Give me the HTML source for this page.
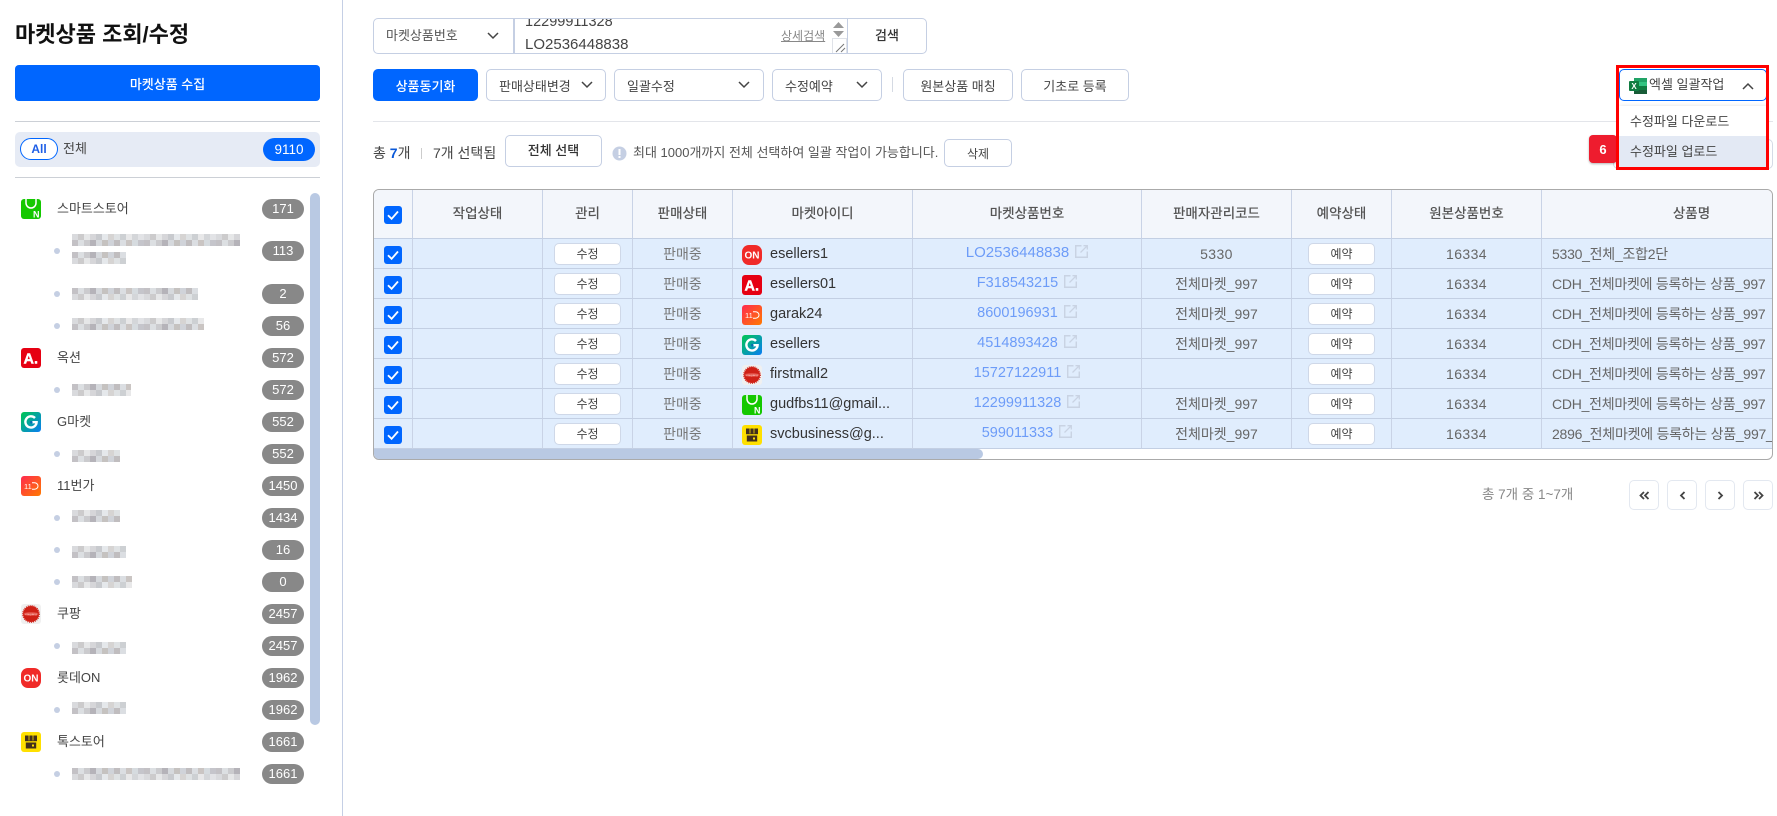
<!DOCTYPE html>
<html lang="ko"><head><meta charset="utf-8"><title>마켓상품 조회/수정</title>
<style>
*{box-sizing:border-box}
html,body{margin:0;padding:0;background:#fff}
body{width:1777px;height:816px;overflow:hidden;position:relative;font-family:"Liberation Sans","Noto Sans CJK KR",sans-serif;color:#333;font-size:13px}
.t{position:absolute;white-space:nowrap;line-height:20px}
.b{position:absolute;display:flex;align-items:center;justify-content:center;background:#fff;border:1px solid #c5cfe3;border-radius:5px;white-space:nowrap;color:#444}
.c{position:absolute;width:42px;height:20px;left:262px;border-radius:10px;background:#888;color:#fff;font-size:13px;line-height:20px;text-align:center}
.l{position:absolute;width:20px;height:20px;left:21px}
.d{position:absolute;width:6px;height:6px;left:54px;border-radius:50%;background:#c5cfe3}
.n{left:57px;font-size:13px;color:#444}
.ch{position:absolute;fill:none;stroke:#444;stroke-width:1.5}
.hr{position:absolute;height:1px;background:#e3e5ea}
#tb{position:absolute;left:373px;top:189px;width:1400px;height:271px;border:1px solid #aaa;border-radius:6px;overflow:hidden;background:#fff}
table{border-collapse:separate;border-spacing:0;table-layout:fixed;width:1468px;position:absolute;left:0;top:0}
th{height:49px;background:#f3f6fb;font-weight:500;font-size:13.5px;color:#555;border-right:1px solid #c9d3e6;border-bottom:1px solid #c3cfe3;padding:0 0 5px}
td{height:30px;background:#e0edfd;border-right:1px solid #c9d3e6;border-bottom:1px solid #c3cfe3;padding:0;text-align:center;font-size:14px;color:#666;white-space:nowrap;overflow:hidden}
td.y{color:#777}
td.m{text-align:left;padding-left:9px}
td.m div{display:flex;align-items:center;color:#333;height:29px;font-size:14.5px}
td.m svg{margin-right:8px;margin-top:2px;flex:none}
td.k{color:#6d9cf8;font-size:14.5px;padding-bottom:2px}
td.k svg{margin-left:6px;vertical-align:-1px}
td.p{text-align:left;padding-left:10px;letter-spacing:-.25px;color:#666}
.s{display:inline-block;width:67px;height:22px;line-height:20px;border:1px solid #cfd8e8;border-radius:5px;background:#fff;font-size:12px;color:#444;margin-top:1px}
.cb{display:block;margin:2px auto 0}
.num{letter-spacing:.4px}
.pg{top:480px;width:30px;height:30px;border-color:#e3e8f0}
</style></head><body>
<svg width="0" height="0" style="position:absolute">
<defs>
<symbol id="i-n" viewBox="0 0 20 20"><rect width="20" height="20" rx="3" fill="#14c800"/><path d="M5 0V4A5 5 0 0 0 15 4V0" fill="none" stroke="#fff" stroke-width="1.5"/><text x="12" y="18.5" font-family="Liberation Sans" font-weight="700" font-size="9" fill="#fff">N</text></symbol>
<symbol id="i-a" viewBox="0 0 20 20"><rect width="20" height="20" rx="3" fill="#e60012"/><text x="2.5" y="15.5" font-family="Liberation Sans" font-weight="700" font-size="14.5" fill="#fff" stroke="#fff" stroke-width=".4">A.</text></symbol>
<linearGradient id="gg" x1="0" y1="0" x2="1" y2="1"><stop offset="0" stop-color="#00c850"/><stop offset="1" stop-color="#0a7cf5"/></linearGradient>
<linearGradient id="g11" x1="0" y1="0" x2="1" y2="1"><stop offset="0" stop-color="#ff2a50"/><stop offset="1" stop-color="#ff7a00"/></linearGradient>
<symbol id="i-g" viewBox="0 0 20 20"><rect width="20" height="20" rx="3" fill="url(#gg)"/><path d="M14 6A5.6 5.6 0 1 0 15.6 10.2H10.500" fill="none" stroke="#fff" stroke-width="2.400"/><circle cx="10.300" cy="10.200" r="1.300" fill="#0a6fb0"/></symbol>
<symbol id="i-11" viewBox="0 0 20 20"><rect width="20" height="20" rx="3" fill="url(#g11)"/><text x="3" y="12.800" font-family="Liberation Sans" font-size="7.500" fill="#fff">11</text><path d="M11 6.800H13.500C15.500 6.800 17 8.200 17 10C17 11.800 15.500 13.200 13.500 13.200H11" fill="none" stroke="#fff" stroke-width="1"/></symbol>
<symbol id="i-c" viewBox="0 0 20 20"><rect width="20" height="20" rx="3" fill="#f0f0f0"/><circle cx="10" cy="10" r="8" fill="#cf2016"/><circle cx="10" cy="10" r="8.400" fill="none" stroke="#cf2016" stroke-width="1" stroke-dasharray="1 1"/><ellipse cx="10" cy="10" rx="7.500" ry="2" fill="#e04a40"/><text x="10" y="11" text-anchor="middle" font-family="Liberation Sans" font-size="3" fill="#ffd9d5">coupang</text></symbol>
<symbol id="i-o" viewBox="0 0 20 20"><rect width="20" height="20" rx="7" fill="#f02a28"/><text x="10" y="13.600" text-anchor="middle" font-family="Liberation Sans" font-weight="700" font-size="10" fill="#fff">ON</text></symbol>
<symbol id="i-t" viewBox="0 0 20 20"><rect width="20" height="20" rx="3" fill="#ffe000"/><path d="M4 3.500H16V9.200H4Z" fill="#43301c"/><path d="M7.600 3.500H8.400V8.500H7.600ZM11.600 3.500H12.400V8.500H11.600Z" fill="#ffe000"/><path d="M4.800 10.500H15.200V16.500H4.800Z" fill="#43301c"/><rect x="11" y="12.500" width="2" height="2" fill="#ffe000"/></symbol>
<symbol id="cbx" viewBox="0 0 18 18"><rect width="18" height="18" rx="3" fill="#0066ff"/><path d="M4 9.200L7.600 12.800L14 5.500" fill="none" stroke="#fff" stroke-width="1.800"/></symbol>
<symbol id="ext" viewBox="0 0 13 13"><path d="M6.500.7H.7V12.300H12.300V6.500" fill="none" stroke="#c9d3e3" stroke-width="1.500"/><path d="M5.500 7.500L12 1M8.500.7H12.300V4.500" fill="none" stroke="#c9d3e3" stroke-width="1.300"/></symbol>
<pattern id="px" patternUnits="userSpaceOnUse" width="72" height="12">
<rect width="72" height="12" fill="#dfe1e4"/>
<rect x="0" y="0" width="6" height="6" fill="#b9b7bc"/><rect x="6" y="0" width="6" height="6" fill="#d6dade"/><rect x="12" y="0" width="6" height="6" fill="#c3c3c6"/><rect x="18" y="0" width="6" height="6" fill="#a9a6ad"/><rect x="24" y="0" width="6" height="6" fill="#cfd3d8"/><rect x="30" y="0" width="6" height="6" fill="#bbb8b6"/><rect x="36" y="0" width="6" height="6" fill="#c8ccd3"/><rect x="42" y="0" width="6" height="6" fill="#b6b2b5"/><rect x="48" y="0" width="6" height="6" fill="#d5d9de"/><rect x="54" y="0" width="6" height="6" fill="#c1bcb9"/><rect x="60" y="0" width="6" height="6" fill="#d0d5da"/><rect x="66" y="0" width="6" height="6" fill="#bcbcc2"/>
<rect x="0" y="6" width="6" height="6" fill="#d3d4d8"/><rect x="6" y="6" width="6" height="6" fill="#c4c2c4"/><rect x="12" y="6" width="6" height="6" fill="#e2e3e5"/><rect x="18" y="6" width="6" height="6" fill="#cfd0d3"/><rect x="24" y="6" width="6" height="6" fill="#bfc1c6"/><rect x="30" y="6" width="6" height="6" fill="#e1e4e8"/><rect x="36" y="6" width="6" height="6" fill="#d0cdcc"/><rect x="42" y="6" width="6" height="6" fill="#dadde0"/><rect x="48" y="6" width="6" height="6" fill="#c5c8cc"/><rect x="54" y="6" width="6" height="6" fill="#e4e5e6"/><rect x="60" y="6" width="6" height="6" fill="#cdcfd3"/><rect x="66" y="6" width="6" height="6" fill="#dddfe2"/>
</pattern>
</defs></svg>

<!-- sidebar -->
<div style="position:absolute;left:342px;top:0;width:1px;height:816px;background:#c5cfe5"></div>
<div class="t" style="left:15px;top:20px;line-height:30px;font-size:22px;font-weight:700;color:#111">마켓상품 조회/수정</div>
<div class="b" style="left:15px;top:65px;width:305px;height:36px;background:#0066ff;border:0;color:#fff;font-weight:500;font-size:13px;border-radius:4px">마켓상품 수집</div>
<div class="hr" style="left:15px;top:121px;width:305px;background:#ccd0d6"></div>
<div style="position:absolute;left:15px;top:132px;width:305px;height:35px;background:#e6ebf5;border-radius:5px"></div>
<div class="b" style="left:20px;top:138px;width:38px;height:22px;border:1px solid #0066ff;border-radius:11px;background:#fff;color:#1e5ee6;font-weight:700;font-size:12px">All</div>
<div class="t" style="left:63px;top:139px;font-size:13px;color:#444">전체</div>
<div class="b" style="left:263px;top:138px;width:52px;height:23px;background:#0066ff;border:0;border-radius:12px;color:#fff;font-size:13.5px">9110</div>
<div class="hr" style="left:15px;top:177px;width:305px;background:#ccd0d6"></div>
<div style="position:absolute;left:310px;top:193px;width:10px;height:532px;background:#b9c9e3;border-radius:5px"></div>

<svg class="l" style="top:199px"><use href="#i-n"/></svg><div class="t n" style="top:199px">스마트스토어</div><div class="c" style="top:199px">171</div>
<div class="d" style="top:248px"></div><div class="c" style="top:241px">113</div>
<div class="d" style="top:291px"></div><div class="c" style="top:284px">2</div>
<div class="d" style="top:323px"></div><div class="c" style="top:316px">56</div>
<svg class="l" style="top:348px"><use href="#i-a"/></svg><div class="t n" style="top:348px">옥션</div><div class="c" style="top:348px">572</div>
<div class="d" style="top:387px"></div><div class="c" style="top:380px">572</div>
<svg class="l" style="top:412px"><use href="#i-g"/></svg><div class="t n" style="top:412px">G마켓</div><div class="c" style="top:412px">552</div>
<div class="d" style="top:451px"></div><div class="c" style="top:444px">552</div>
<svg class="l" style="top:476px"><use href="#i-11"/></svg><div class="t n" style="top:476px">11번가</div><div class="c" style="top:476px">1450</div>
<div class="d" style="top:515px"></div><div class="c" style="top:508px">1434</div>
<div class="d" style="top:547px"></div><div class="c" style="top:540px">16</div>
<div class="d" style="top:579px"></div><div class="c" style="top:572px">0</div>
<svg class="l" style="top:604px"><use href="#i-c"/></svg><div class="t n" style="top:604px">쿠팡</div><div class="c" style="top:604px">2457</div>
<div class="d" style="top:643px"></div><div class="c" style="top:636px">2457</div>
<svg class="l" style="top:668px"><use href="#i-o"/></svg><div class="t n" style="top:668px">롯데ON</div><div class="c" style="top:668px">1962</div>
<div class="d" style="top:707px"></div><div class="c" style="top:700px">1962</div>
<svg class="l" style="top:732px"><use href="#i-t"/></svg><div class="t n" style="top:732px">톡스토어</div><div class="c" style="top:732px">1661</div>
<div class="d" style="top:771px"></div><div class="c" style="top:764px">1661</div>

<svg style="position:absolute;left:0;top:0;opacity:.85" width="342" height="816" fill="url(#px)">
<rect x="72" y="234" width="168" height="12"/><rect x="72" y="252" width="54" height="12"/>
<rect x="72" y="288" width="126" height="12"/><rect x="72" y="318" width="132" height="12"/>
<rect x="72" y="384" width="59" height="12"/><rect x="72" y="450" width="48" height="12"/>
<rect x="72" y="510" width="48" height="12"/><rect x="72" y="546" width="54" height="12"/>
<rect x="72" y="576" width="60" height="12"/><rect x="72" y="642" width="54" height="12"/>
<rect x="72" y="702" width="54" height="12"/><rect x="72" y="768" width="168" height="12"/>
</svg>

<!-- search row -->
<div style="position:absolute;left:373px;top:18px;width:554px;height:36px;border:1px solid #c5cfe3;border-radius:5px;overflow:hidden;background:#fff">
  <div style="position:absolute;left:139px;top:0;width:2px;height:34px;background:#c5cfe3"></div>
  <div style="position:absolute;left:473px;top:0;width:1px;height:34px;background:#c5cfe3"></div>
  <div class="t" style="left:151px;top:-7px;font-size:14.5px;color:#444">12299911328</div>
  <div class="t" style="left:151px;top:16px;font-size:15px;color:#444">LO2536448838</div>
  <div style="position:absolute;left:458px;top:19px;width:15px;height:16px;border:1px solid #dfe2e8;background:#fff"></div>
  <svg style="position:absolute;left:458px;top:19px" width="15" height="15"><path d="M4 14L12 6M9 14L13 10" stroke="#777" fill="none"/></svg>
  <svg style="position:absolute;left:457px;top:2px" width="15" height="17"><path d="M7.500 1L13 7H2zM7.500 16L2 10H13z" fill="#999"/></svg>
</div>
<div class="t" style="left:386px;top:26px;font-size:13px;color:#555">마켓상품번호</div>
<svg class="ch" style="left:487px;top:32px" width="12" height="8"><path d="M1 1L6 6L11 1"/></svg>
<div class="t" style="left:781px;top:26px;font-size:12px;color:#888;text-decoration:underline">상세검색</div>
<div class="t" style="left:875px;top:26px;font-size:13px;font-weight:500;color:#333">검색</div>

<!-- actions -->
<div class="b" style="left:373px;top:69px;width:105px;height:32px;background:#0066ff;border:0;color:#fff;font-weight:500;font-size:13px">상품동기화</div>
<div class="b" style="left:486px;top:69px;width:120px;height:32px;justify-content:flex-start;padding-left:12px">판매상태변경</div>
<svg class="ch" style="left:581px;top:81px" width="12" height="8"><path d="M1 1L6 6L11 1"/></svg>
<div class="b" style="left:614px;top:69px;width:150px;height:32px;justify-content:flex-start;padding-left:12px">일괄수정</div>
<svg class="ch" style="left:738px;top:81px" width="12" height="8"><path d="M1 1L6 6L11 1"/></svg>
<div class="b" style="left:772px;top:69px;width:110px;height:32px;justify-content:flex-start;padding-left:12px">수정예약</div>
<svg class="ch" style="left:856px;top:81px" width="12" height="8"><path d="M1 1L6 6L11 1"/></svg>
<div style="position:absolute;left:892px;top:77px;width:1px;height:15px;background:#d5dae3"></div>
<div class="b" style="left:903px;top:69px;width:110px;height:32px">원본상품 매칭</div>
<div class="b" style="left:1021px;top:69px;width:108px;height:32px">기초로 등록</div>
<div class="hr" style="left:373px;top:121px;width:1400px"></div>

<!-- selection row -->
<div class="t" style="left:373px;top:143px;font-size:14px;color:#444">총 <b style="color:#0a58d8">7</b>개</div>
<div style="position:absolute;left:421px;top:148px;width:1px;height:11px;background:#ccc"></div>
<div class="t" style="left:433px;top:143px;font-size:14px;color:#444">7개 선택됨</div>
<div class="b" style="left:505px;top:135px;width:97px;height:32px;font-weight:500;color:#333;padding-bottom:4px">전체 선택</div>
<svg style="position:absolute;left:612px;top:146px" width="15" height="15"><circle cx="7.500" cy="7.500" r="7" fill="#c5cfe3"/><rect x="6.500" y="3" width="2" height="6" fill="#fff"/><rect x="6.500" y="10" width="2" height="2" fill="#fff"/></svg>
<div class="t" style="left:633px;top:143px;font-size:13px;color:#555">최대 1000개까지 전체 선택하여 일괄 작업이 가능합니다.</div>
<div class="b" style="left:944px;top:139px;width:68px;height:28px;font-size:12px">삭제</div>

<!-- excel -->
<div class="b" style="left:1613px;top:139px;width:160px;height:30px;border-color:#d5dbe6"></div>
<div class="b" style="left:1589px;top:135px;width:28px;height:28px;background:#ee1c2e;border:0;border-radius:4px;color:#fff;font-weight:700;font-size:13px;box-shadow:0 1px 2px rgba(0,0,0,.3)">6</div>
<div class="b" style="left:1619px;top:69px;width:148px;height:32px;border:1px solid #0066ff"></div>
<svg style="position:absolute;left:1629px;top:78px" width="18" height="16"><rect x="5" width="13" height="4" fill="#21a366"/><rect x="5" y="4" width="13" height="4" fill="#33c481"/><rect x="5" y="8" width="13" height="4" fill="#107c41"/><rect x="5" y="12" width="13" height="4" fill="#185c37"/><rect y="3" width="10" height="10" rx="1" fill="#107c41"/><text x="5" y="11.200" text-anchor="middle" font-family="Liberation Sans" font-weight="700" font-size="8" fill="#fff">X</text></svg>
<div class="t" style="left:1649px;top:75px;font-size:13px;color:#444">엑셀 일괄작업</div>
<svg class="ch" style="left:1742px;top:82px" width="12" height="8"><path d="M1 7L6 2L11 7"/></svg>
<div style="position:absolute;left:1619px;top:106px;width:148px;height:61px;background:#fff;box-shadow:0 0 4px rgba(0,0,0,.12)"></div>
<div class="t" style="left:1630px;top:112px;font-size:13px;color:#444">수정파일 다운로드</div>
<div style="position:absolute;left:1619px;top:136px;width:148px;height:31px;background:#e3e9f4"></div>
<div class="t" style="left:1630px;top:142px;font-size:13px;color:#444">수정파일 업로드</div>
<div style="position:absolute;left:1616px;top:65px;width:153px;height:105px;border:3px solid #f00"></div>

<!-- table -->
<div id="tb">
<table>
<colgroup><col style="width:39px"><col style="width:130px"><col style="width:90px"><col style="width:100px"><col style="width:180px"><col style="width:229px"><col style="width:150px"><col style="width:100px"><col style="width:150px"><col style="width:300px"></colgroup>
<thead><tr><th style="padding:0"><svg class="cb" width="18" height="18"><use href="#cbx"/></svg></th><th>작업상태</th><th>관리</th><th>판매상태</th><th>마켓아이디</th><th>마켓상품번호</th><th>판매자관리코드</th><th>예약상태</th><th>원본상품번호</th><th>상품명</th></tr></thead>
<tbody>
<tr><td><svg class="cb" width="18" height="18"><use href="#cbx"/></svg></td><td></td><td><span class="s">수정</span></td><td class="y">판매중</td><td class="m"><div><svg width="20" height="20"><use href="#i-o"/></svg>esellers1</div></td><td class="k" style="font-size:15px">LO2536448838<svg width="13" height="13"><use href="#ext"/></svg></td><td class="num">5330</td><td><span class="s">예약</span></td><td class="num">16334</td><td class="p">5330_전체_조합2단</td></tr>
<tr><td><svg class="cb" width="18" height="18"><use href="#cbx"/></svg></td><td></td><td><span class="s">수정</span></td><td class="y">판매중</td><td class="m"><div><svg width="20" height="20"><use href="#i-a"/></svg>esellers01</div></td><td class="k">F318543215<svg width="13" height="13"><use href="#ext"/></svg></td><td>전체마켓_997</td><td><span class="s">예약</span></td><td class="num">16334</td><td class="p">CDH_전체마켓에 등록하는 상품_997</td></tr>
<tr><td><svg class="cb" width="18" height="18"><use href="#cbx"/></svg></td><td></td><td><span class="s">수정</span></td><td class="y">판매중</td><td class="m"><div><svg width="20" height="20"><use href="#i-11"/></svg>garak24</div></td><td class="k">8600196931<svg width="13" height="13"><use href="#ext"/></svg></td><td>전체마켓_997</td><td><span class="s">예약</span></td><td class="num">16334</td><td class="p">CDH_전체마켓에 등록하는 상품_997</td></tr>
<tr><td><svg class="cb" width="18" height="18"><use href="#cbx"/></svg></td><td></td><td><span class="s">수정</span></td><td class="y">판매중</td><td class="m"><div><svg width="20" height="20"><use href="#i-g"/></svg>esellers</div></td><td class="k">4514893428<svg width="13" height="13"><use href="#ext"/></svg></td><td>전체마켓_997</td><td><span class="s">예약</span></td><td class="num">16334</td><td class="p">CDH_전체마켓에 등록하는 상품_997</td></tr>
<tr><td><svg class="cb" width="18" height="18"><use href="#cbx"/></svg></td><td></td><td><span class="s">수정</span></td><td class="y">판매중</td><td class="m"><div><svg width="20" height="20"><use href="#i-c"/></svg>firstmall2</div></td><td class="k">15727122911<svg width="13" height="13"><use href="#ext"/></svg></td><td></td><td><span class="s">예약</span></td><td class="num">16334</td><td class="p">CDH_전체마켓에 등록하는 상품_997</td></tr>
<tr><td><svg class="cb" width="18" height="18"><use href="#cbx"/></svg></td><td></td><td><span class="s">수정</span></td><td class="y">판매중</td><td class="m"><div><svg width="20" height="20"><use href="#i-n"/></svg>gudfbs11@gmail...</div></td><td class="k">12299911328<svg width="13" height="13"><use href="#ext"/></svg></td><td>전체마켓_997</td><td><span class="s">예약</span></td><td class="num">16334</td><td class="p">CDH_전체마켓에 등록하는 상품_997</td></tr>
<tr><td><svg class="cb" width="18" height="18"><use href="#cbx"/></svg></td><td></td><td><span class="s">수정</span></td><td class="y">판매중</td><td class="m"><div><svg width="20" height="20"><use href="#i-t"/></svg>svcbusiness@g...</div></td><td class="k">599011333<svg width="13" height="13"><use href="#ext"/></svg></td><td>전체마켓_997</td><td><span class="s">예약</span></td><td class="num">16334</td><td class="p">2896_전체마켓에 등록하는 상품_997_1</td></tr>
</tbody></table>
<div style="position:absolute;left:0;top:259px;width:609px;height:10px;background:#b9c9e3;border-radius:0 5px 5px 0"></div>
</div>

<!-- pagination -->
<div class="t" style="left:1482px;top:485px;font-size:13.5px;color:#888">총 7개 중 1~7개</div>
<div class="b pg" style="left:1629px"><svg width="11" height="9" fill="none" stroke="#444" stroke-width="1.800"><path d="M5 1L1.500 4.500L5 8M9.500 1L6 4.500L9.500 8"/></svg></div>
<div class="b pg" style="left:1667px"><svg width="7" height="9" fill="none" stroke="#444" stroke-width="1.800"><path d="M5.500 1L2 4.500L5.500 8"/></svg></div>
<div class="b pg" style="left:1705px"><svg width="7" height="9" fill="none" stroke="#444" stroke-width="1.800"><path d="M1.500 1L5 4.500L1.500 8"/></svg></div>
<div class="b pg" style="left:1743px"><svg width="11" height="9" fill="none" stroke="#444" stroke-width="1.800"><path d="M1.500 1L5 4.500L1.500 8M6 1L9.500 4.500L6 8"/></svg></div>
</body></html>
